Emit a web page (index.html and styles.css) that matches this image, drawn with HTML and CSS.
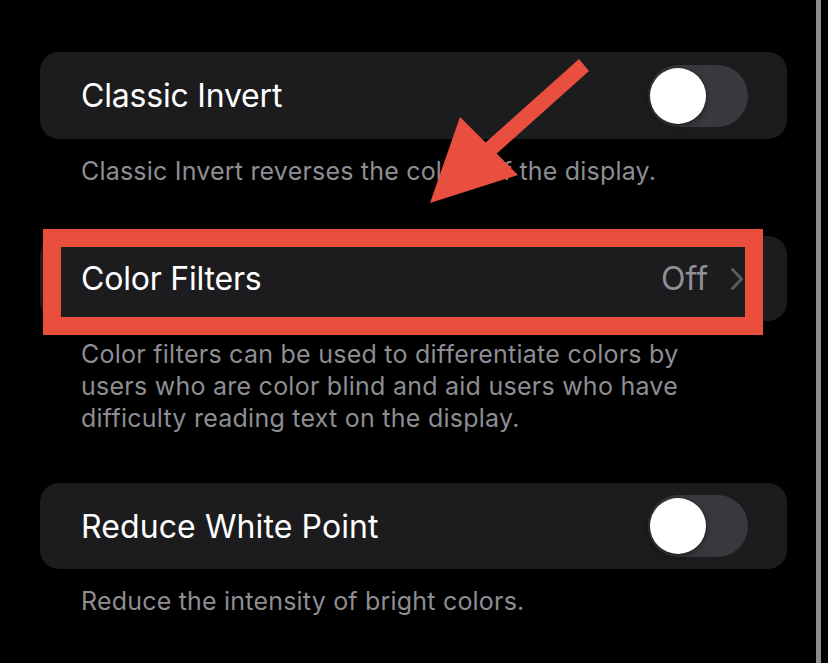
FILE: index.html
```html
<!DOCTYPE html>
<html>
<head>
<meta charset="utf-8">
<link rel="stylesheet" href="styles.css">
</head>
<body>
<div class="screen">
  <div class="content">
    <div class="card">
      <span class="label">Classic Invert</span>
      <div class="toggle"><div class="knob"></div></div>
    </div>
    <p class="caption">Classic Invert reverses the colors of the display.</p>

    <div class="card card-2">
      <span class="label">Color Filters</span>
      <span class="value">Off</span>
      <svg class="chevron" width="14" height="24" viewBox="0 0 14 24"><path d="M2.5 2.5 L11.5 12 L2.5 21.5" fill="none" stroke="#5b5b60" stroke-width="3" stroke-linecap="round" stroke-linejoin="round"/></svg>
    </div>
    <p class="caption caption-multi">Color filters can be used to differentiate colors by<br>users who are color blind and aid users who have<br>difficulty reading text on the display.</p>

    <div class="card card-3">
      <span class="label label-wide">Reduce White Point</span>
      <div class="toggle"><div class="knob"></div></div>
    </div>
    <p class="caption">Reduce the intensity of bright colors.</p>
  </div>
  <div class="scrollbar"></div>

  <div class="highlight"></div>
  <svg class="arrow" width="828" height="663" viewBox="0 0 828 663">
    <polygon points="579,59 589,71 496.7,153.6 518,175 430,203 460,117 485.6,142.6" fill="#e94f3e"/>
  </svg>
</div>
</body>
</html>
```
FILE: styles.css
```css
* { box-sizing: border-box; }
html, body {
  margin: 0;
  padding: 0;
  background: #000;
}
body {
  width: 828px;
  height: 663px;
  overflow: hidden;
  font-family: Inter, "Noto Sans", "Liberation Sans", sans-serif;
}
.screen {
  position: relative;
  width: 828px;
  height: 663px;
  display: flex;
  flex-direction: row;
  background: #000;
}
.content {
  width: 816px;
  padding: 52px 29px 0 40px;
  display: flex;
  flex-direction: column;
}
.scrollbar {
  width: 5px;
  height: 663px;
  background: #8b8b8b;
}
.card {
  height: 87px;
  background: #1c1c1e;
  border-radius: 19px;
  display: flex;
  align-items: center;
  padding: 0 39px 0 41px;
}
.card-2 { height: 85px; margin-top: 49px; }
.card-3 { height: 86px; margin-top: 49px; }
.label {
  color: #fff;
  font-size: 32px;
  letter-spacing: -0.2px;
  flex: 1;
}
.label-wide { letter-spacing: 0.1px; }
.value {
  color: #8e8e93;
  font-size: 32px;
  margin-right: 22px;
}
.chevron { margin-right: 4px; }
.toggle {
  width: 100px;
  height: 62px;
  border-radius: 31px;
  background: #39393d;
  display: flex;
  align-items: center;
  padding-left: 2px;
}
.knob {
  width: 56px;
  height: 56px;
  border-radius: 50%;
  background: #fff;
  box-shadow: 0 2px 6px rgba(0,0,0,0.45), 0 0 0 1px rgba(0,0,0,0.08);
}
.caption {
  margin: 0;
  padding: 16px 0 0 41px;
  color: #8d8d93;
  font-size: 25px;
  line-height: 32px;
  letter-spacing: 0.2px;
}
.caption-multi { padding-top: 17px; letter-spacing: 0.25px; }
.highlight {
  position: absolute;
  left: 43px;
  top: 229px;
  width: 720px;
  height: 106px;
  border: 18px solid #ea4f3e;
}
.arrow {
  position: absolute;
  left: 0;
  top: 0;
}
```
